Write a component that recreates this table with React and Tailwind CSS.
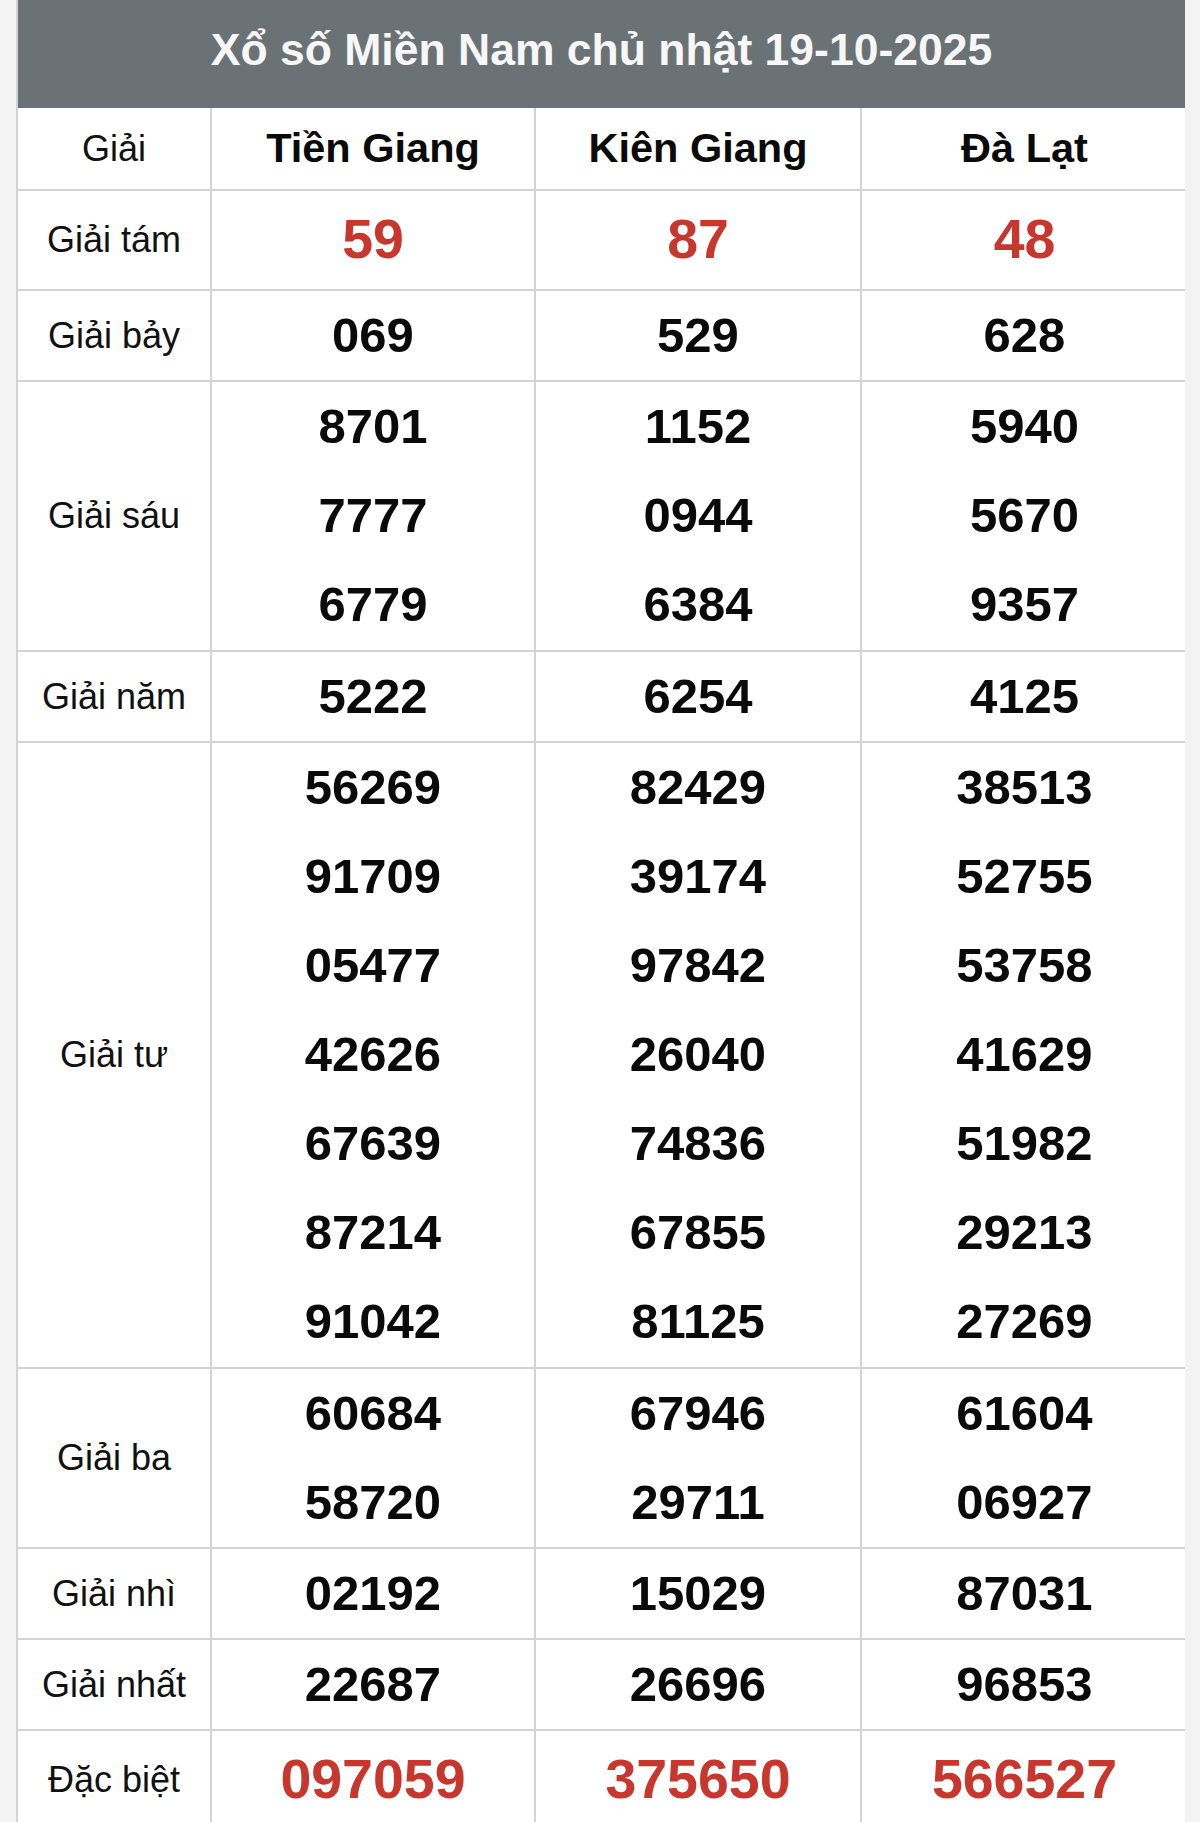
import React from "react";

const font = { fontFamily: '"Liberation Sans", Arial, sans-serif' };

const provinces = ["Tiền Giang", "Kiên Giang", "Đà Lạt"];

const rows = [
  { label: "Giải tám", red: true, vals: [["59"], ["87"], ["48"]] },
  { label: "Giải bảy", vals: [["069"], ["529"], ["628"]] },
  {
    label: "Giải sáu",
    pad: "pb-[1px]",
    vals: [
      ["8701", "7777", "6779"],
      ["1152", "0944", "6384"],
      ["5940", "5670", "9357"],
    ],
  },
  { label: "Giải năm", vals: [["5222"], ["6254"], ["4125"]] },
  {
    label: "Giải tư",
    pad: "pb-[1px]",
    vals: [
      ["56269", "91709", "05477", "42626", "67639", "87214", "91042"],
      ["82429", "39174", "97842", "26040", "74836", "67855", "81125"],
      ["38513", "52755", "53758", "41629", "51982", "29213", "27269"],
    ],
  },
  {
    label: "Giải ba",
    vals: [
      ["60684", "58720"],
      ["67946", "29711"],
      ["61604", "06927"],
    ],
  },
  { label: "Giải nhì", vals: [["02192"], ["15029"], ["87031"]] },
  { label: "Giải nhất", vals: [["22687"], ["26696"], ["96853"]] },
  { label: "Đặc biệt", red: true, vals: [["097059"], ["375650"], ["566527"]] },
];

function Row({ row }) {
  return (
    <div className="grid grid-cols-[194px_324px_326px_325px] border-b-2 border-[#d3d3d3]">
      <div className="flex items-center justify-center border-r-2 border-[#d3d3d3] text-[36px] text-[#111]">
        {row.label}
      </div>
      {row.vals.map((list, i) => (
        <div
          key={i}
          className={`flex flex-col items-center border-r-2 border-[#d3d3d3] last:border-r-0 ${row.pad || ""}`}
        >
          {list.map((n) => (
            <div
              key={n}
              className={
                row.red
                  ? "flex h-[98px] items-center text-[55.5px] font-bold leading-none text-[#c8372d]"
                  : "flex h-[89px] items-center text-[49px] font-bold leading-none text-[#0a0a0a]"
              }
            >
              {n}
            </div>
          ))}
        </div>
      ))}
    </div>
  );
}

export default function App() {
  return (
    <div className="h-[1822px] overflow-hidden bg-[#f3f3f3] pl-[16px] pr-[15px]" style={font}>
      <div className="w-[1169px] border-l-2 border-[#d3d3d3] bg-white">
        <div className="flex h-[108px] items-center justify-center bg-[#6b7276] pb-[7px] text-[44.5px] font-bold text-[#f7f7f7]">
          Xổ số Miền Nam chủ nhật 19-10-2025
        </div>

        {/* province header */}
        <div className="grid h-[83px] grid-cols-[194px_324px_326px_325px] border-b-2 border-[#d3d3d3]">
          <div className="flex items-center justify-center border-r-2 border-[#d3d3d3] text-[36px] text-[#111]">
            Giải
          </div>
          {provinces.map((p) => (
            <div
              key={p}
              className="flex items-center justify-center border-r-2 border-[#d3d3d3] text-[41.5px] font-bold text-[#0a0a0a] last:border-r-0"
            >
              {p}
            </div>
          ))}
        </div>

        {rows.map((row) => (
          <Row key={row.label} row={row} />
        ))}
      </div>
    </div>
  );
}
